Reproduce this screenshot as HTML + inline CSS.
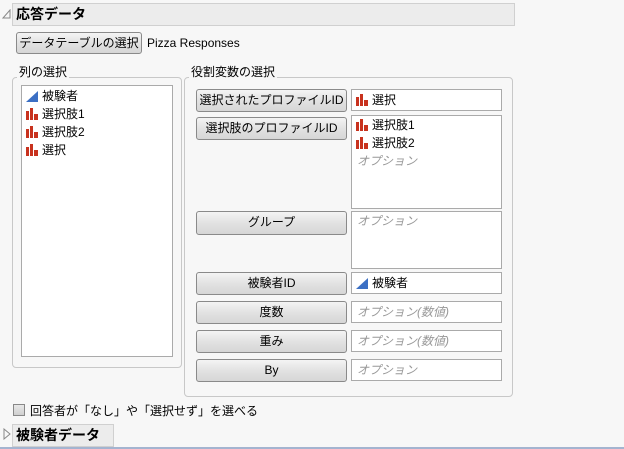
<!DOCTYPE html>
<html><head><meta charset="utf-8"><style>
*{box-sizing:border-box;margin:0;padding:0}
body{width:624px;height:449px;background:#f7f7f7;position:relative;overflow:hidden;font-family:"Liberation Sans","Noto Sans CJK JP",sans-serif;font-size:12px;color:#000}
.a{position:absolute}
.hdr{background:#ececec;border:1px solid #d0d0d0;font-weight:bold;font-size:14px;padding-left:3px;line-height:20px}
.btn{position:absolute;border:1px solid #8a8a8a;border-radius:3px;background:linear-gradient(#f4f4f4,#e2e2e2 50%,#d6d6d6);text-align:center;line-height:20px;font-size:12px}
.box{position:absolute;background:#fff;border:1px solid #aaa}
.grp{position:absolute;border:1px solid #c8c8c8;border-radius:4px}
.leg{position:absolute;background:#f7f7f7;padding:0 2px;font-size:12px;line-height:14px}
.opt{color:#999;font-style:italic;font-size:12px}
.it{position:absolute;left:3px;height:16px;line-height:16px;white-space:nowrap}
.bar{display:inline-block;vertical-align:-2px;margin-right:3px}
</style></head><body>
<svg class="a" style="left:2px;top:9px" width="9" height="10"><path d="M8 1 L8 9 L1 9 Z" fill="none" stroke="#888"/></svg>
<div class="a hdr" style="left:12px;top:3px;width:503px;height:23px">応答データ</div>
<div class="btn" style="left:16px;top:32px;width:126px;height:22px">データテーブルの選択</div>
<div class="a" style="left:147px;top:36px">Pizza Responses</div>

<div class="grp" style="left:12px;top:77px;width:170px;height:291px"></div>
<div class="leg" style="left:17px;top:65px">列の選択</div>
<div class="box" style="left:21px;top:85px;width:152px;height:272px">
<div class="it" style="top:2px"><svg class="bar" width="14" height="12"><path d="M1 12 L13 1 L13 12 Z" fill="#3b6fc4"/></svg>被験者</div>
<div class="it" style="top:20px"><svg class="bar" width="14" height="12"><path d="M1 3h3v9H1zM5 0h3v12H5zM9 6h4v6H9z" fill="#c8321e"/></svg>選択肢1</div>
<div class="it" style="top:38px"><svg class="bar" width="14" height="12"><path d="M1 3h3v9H1zM5 0h3v12H5zM9 6h4v6H9z" fill="#c8321e"/></svg>選択肢2</div>
<div class="it" style="top:56px"><svg class="bar" width="14" height="12"><path d="M1 3h3v9H1zM5 0h3v12H5zM9 6h4v6H9z" fill="#c8321e"/></svg>選択</div>
</div>

<div class="grp" style="left:184px;top:77px;width:329px;height:320px"></div>
<div class="leg" style="left:189px;top:65px">役割変数の選択</div>

<div class="btn" style="left:196px;top:89px;width:151px;height:23px">選択されたプロファイルID</div>
<div class="btn" style="left:196px;top:117px;width:151px;height:23px">選択肢のプロファイルID</div>
<div class="btn" style="left:196px;top:211px;width:151px;height:24px">グループ</div>
<div class="btn" style="left:196px;top:272px;width:151px;height:23px">被験者ID</div>
<div class="btn" style="left:196px;top:301px;width:151px;height:23px">度数</div>
<div class="btn" style="left:196px;top:330px;width:151px;height:23px">重み</div>
<div class="btn" style="left:196px;top:359px;width:151px;height:23px">By</div>

<div class="box" style="left:351px;top:89px;width:151px;height:22px"><div class="it" style="top:2px"><svg class="bar" width="14" height="12"><path d="M1 3h3v9H1zM5 0h3v12H5zM9 6h4v6H9z" fill="#c8321e"/></svg>選択</div></div>
<div class="box" style="left:351px;top:115px;width:151px;height:94px">
<div class="it" style="top:1px"><svg class="bar" width="14" height="12"><path d="M1 3h3v9H1zM5 0h3v12H5zM9 6h4v6H9z" fill="#c8321e"/></svg>選択肢1</div>
<div class="it" style="top:19px"><svg class="bar" width="14" height="12"><path d="M1 3h3v9H1zM5 0h3v12H5zM9 6h4v6H9z" fill="#c8321e"/></svg>選択肢2</div>
<div class="it opt" style="top:37px;left:5px">オプション</div>
</div>
<div class="box" style="left:351px;top:211px;width:151px;height:58px"><div class="it opt" style="top:1px;left:5px">オプション</div></div>
<div class="box" style="left:351px;top:272px;width:151px;height:22px"><div class="it" style="top:2px"><svg class="bar" width="14" height="12"><path d="M1 12 L13 1 L13 12 Z" fill="#3b6fc4"/></svg>被験者</div></div>
<div class="box" style="left:351px;top:301px;width:151px;height:22px"><div class="it opt" style="top:2px;left:5px">オプション(数値)</div></div>
<div class="box" style="left:351px;top:330px;width:151px;height:22px"><div class="it opt" style="top:2px;left:5px">オプション(数値)</div></div>
<div class="box" style="left:351px;top:359px;width:151px;height:22px"><div class="it opt" style="top:2px;left:5px">オプション</div></div>

<div class="a" style="left:13px;top:404px;width:12px;height:12px;border:1px solid #888;background:linear-gradient(#e8e8e8,#cfcfcf)"></div>
<div class="a" style="left:30px;top:402px">回答者が「なし」や「選択せず」を選べる</div>

<svg class="a" style="left:3px;top:428px" width="8" height="12"><path d="M1 1 L7 6 L1 11 Z" fill="none" stroke="#888"/></svg>
<div class="a hdr" style="left:12px;top:424px;width:102px;height:23px">被験者データ</div>
<div class="a" style="left:0;top:447px;width:624px;height:2px;background:#a4b4d0"></div>
</body></html>
